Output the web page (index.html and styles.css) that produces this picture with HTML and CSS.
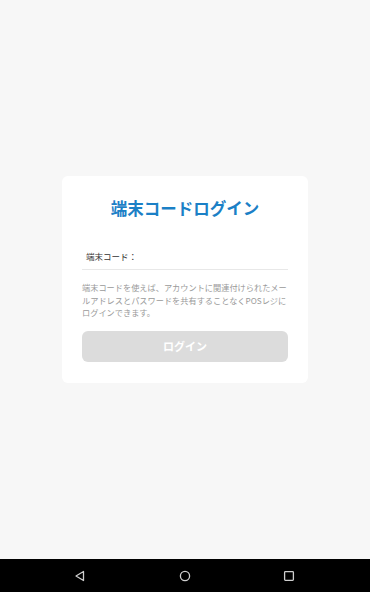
FILE: index.html
```html
<!DOCTYPE html>
<html lang="ja">
<head>
<meta charset="utf-8">
<link rel="stylesheet" href="styles.css">
</head>
<body>
<div class="screen">
  <main class="main">
    <section class="card">
      <h1 class="title">端末コードログイン</h1>
      <div class="field">
        <span class="label">端末コード：</span>
      </div>
      <p class="desc">端末コードを使えば、アカウントに関連付けられたメールアドレスとパスワードを共有することなくPOSレジにログインできます。</p>
      <button class="btn" type="button">ログイン</button>
    </section>
  </main>
  <nav class="navbar">
    <svg class="nav-icon" width="12" height="12" viewBox="0 0 12 12"><path d="M9.5 1.5 L2 6 L9.5 10.5 Z" fill="none" stroke="#cfcfcf" stroke-width="1.3" stroke-linejoin="round"/></svg>
    <svg class="nav-icon" width="12" height="12" viewBox="0 0 12 12"><circle cx="6" cy="6" r="4.6" fill="none" stroke="#cfcfcf" stroke-width="1.3"/></svg>
    <svg class="nav-icon" width="12" height="12" viewBox="0 0 12 12"><rect x="1.6" y="1.6" width="8.8" height="8.8" rx="0.8" fill="none" stroke="#cfcfcf" stroke-width="1.3"/></svg>
  </nav>
</div>
</body>
</html>
```

FILE: styles.css
```css
* { box-sizing: border-box; }
html, body {
  margin: 0;
  padding: 0;
  background: #f7f7f7;
  font-family: "Noto Sans CJK JP", "Noto Sans", sans-serif;
}
.screen {
  width: 370px;
  height: 592px;
  display: flex;
  flex-direction: column;
}
.main {
  flex: 1;
  display: flex;
  align-items: center;
  justify-content: center;
}
.card {
  width: 246px;
  height: 207px;
  background: #ffffff;
  border-radius: 6px;
  padding: 22px 20px 21px;
  display: flex;
  flex-direction: column;
}
.title {
  margin: 0;
  font-size: 16.5px;
  line-height: 20px;
  font-weight: 700;
  color: #1b80c6;
  text-align: center;
}
.field {
  margin-top: 32px;
  padding: 0 0 7px 4px;
  border-bottom: 1px solid #e8e8e8;
}
.label {
  display: block;
  font-size: 8.5px;
  line-height: 12px;
  color: #333333;
}
.desc {
  margin: 11px 0 0;
  font-size: 8.2px;
  line-height: 12.6px;
  color: #9a9a9a;
}
.btn {
  margin-top: 12px;
  height: 32px;
  border: none;
  border-radius: 6px;
  background: #dcdcdc;
  color: #ffffff;
  font-family: inherit;
  font-size: 11px;
  font-weight: 700;
  padding: 0;
}
.navbar {
  height: 33px;
  background: #000000;
  display: flex;
  align-items: center;
  justify-content: space-between;
  padding: 0 75px 0 74px;
}
.nav-icon { display: block; }
```
